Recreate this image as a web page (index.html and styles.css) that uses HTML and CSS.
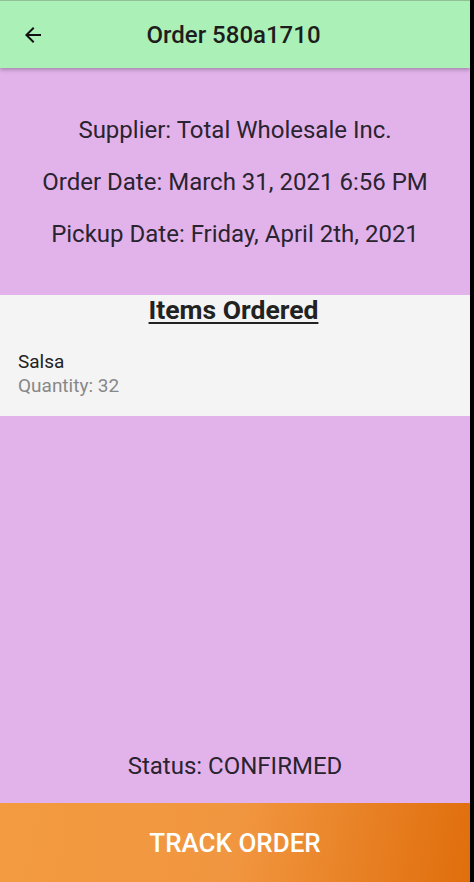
FILE: index.html
```html
<!DOCTYPE html>
<html>
<head>
<meta charset="utf-8">
<link rel="stylesheet" href="styles.css">
</head>
<body>
<div class="app">
  <header class="appbar">
    <button class="back" aria-label="Back">
      <svg width="24" height="24" viewBox="0 0 24 24"><path d="M20 11H7.83l5.59-5.59L12 4l-8 8 8 8 1.41-1.41L7.83 13H20v-2z" fill="#111"/></svg>
    </button>
    <h1 class="title">Order 580a1710</h1>
  </header>
  <section class="info">
    <p>Supplier: Total Wholesale Inc.</p>
    <p>Order Date: March 31, 2021 6:56 PM</p>
    <p>Pickup Date: Friday, April 2th, 2021</p>
  </section>
  <section class="items">
    <h2 class="items-title">Items Ordered</h2>
    <div class="item">
      <div class="item-name">Salsa</div>
      <div class="item-qty">Quantity: 32</div>
    </div>
  </section>
  <div class="spacer"></div>
  <div class="status">Status: CONFIRMED</div>
  <button class="track">TRACK ORDER</button>
</div>
</body>
</html>
```
FILE: styles.css
```css
html, body {
  margin: 0;
  padding: 0;
  height: 100%;
  background: #000;
}
body {
  font-family: Roboto, "Noto Sans", sans-serif;
}
.app {
  width: 470px;
  height: 882px;
  background: #e2b3ea;
  display: flex;
  flex-direction: column;
}
.appbar {
  height: 67px;
  flex: none;
  background: #abf0b7;
  border-top: 1px solid #8fbf95;
  box-shadow: 0 2px 4px rgba(0,0,0,0.25);
  display: flex;
  align-items: center;
  position: relative;
  z-index: 1;
}
.back {
  width: 48px;
  height: 48px;
  margin-left: 9px;
  border: none;
  background: none;
  padding: 0;
  display: flex;
  align-items: center;
  justify-content: center;
}
.title {
  flex: 1;
  margin: 0 60px 0 0;
  text-align: center;
  font-size: 24px;
  font-weight: 500;
  color: #1d1d1d;
}
.info {
  padding: 48px 0 47px;
  display: flex;
  flex-direction: column;
  align-items: center;
  gap: 24px;
}
.info p {
  margin: 0;
  font-size: 24px;
  line-height: 28px;
  color: #2a2330;
}
.items {
  background: #f4f4f4;
  padding: 0 18px 18px;
}
.items-title {
  margin: 0 3px 0 0;
  text-align: center;
  font-size: 26.5px;
  font-weight: 700;
  line-height: 30px;
  color: #222;
  text-decoration: underline;
  text-decoration-thickness: 2px;
  text-underline-offset: 3px;
}
.item {
  padding-top: 25px;
}
.item-name {
  font-size: 19px;
  line-height: 24px;
  color: #222;
}
.item-qty {
  font-size: 19px;
  line-height: 24px;
  color: #888;
}
.spacer {
  flex: 1;
}
.status {
  text-align: center;
  font-size: 24px;
  line-height: 28px;
  color: #2a2330;
  padding-bottom: 23px;
}
.track {
  height: 79px;
  flex: none;
  border: none;
  margin: 0;
  background: linear-gradient(100deg, #f39b40 0%, #f19640 50%, #e06e0c 100%);
  color: #fff;
  font-family: Roboto, sans-serif;
  font-size: 26px;
  font-weight: 500;
}
```
